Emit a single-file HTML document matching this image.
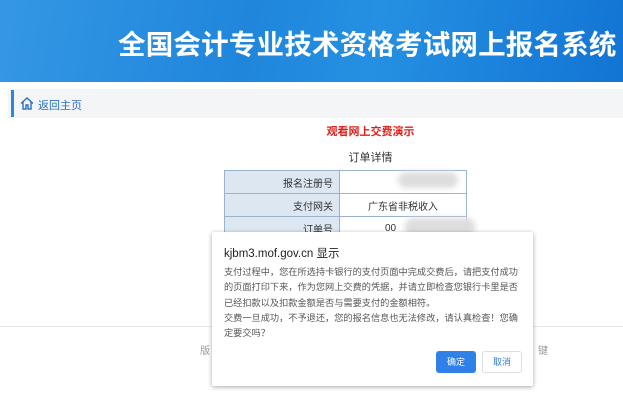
<!DOCTYPE html>
<html><head><meta charset="utf-8"><style>
*{margin:0;padding:0;box-sizing:border-box}
body{width:623px;height:413px;overflow:hidden;background:#fff;font-family:"Liberation Sans","Noto Sans CJK SC",sans-serif;position:relative}
.hdr{position:absolute;left:0;top:0;width:623px;height:82px;background:linear-gradient(100deg,#3597e4 0%,#1f86dc 40%,#2590e2 60%,#1274d4 100%)}
.hdr h1{position:absolute;left:118px;top:22px;color:#fff;font-size:27.5px;font-weight:bold;white-space:nowrap;letter-spacing:0.2px}
.nav{position:absolute;left:8px;top:89px;width:615px;height:29px;background:#f4f5f7}
.nav .bar{position:absolute;left:3px;top:1px;width:3px;height:27px;background:#2c86dc}
.nav span{position:absolute;left:30px;top:8px;font-size:11px;color:#2a6fc0}
.red{position:absolute;left:0;width:623px;top:123px;text-align:center;padding-left:118px;color:#e0201a;font-weight:bold;font-size:11px}
.sub{position:absolute;left:0;width:623px;top:149px;text-align:center;padding-left:118px;font-size:11px;color:#333}
table{position:absolute;left:224px;top:170px;border-collapse:collapse;font-size:10px;color:#333}
td{border:1px solid #9ab3cc;height:23px}
td.l{width:115px;background:#dde7f1;text-align:right;padding-right:6px}
td.r{width:127px;text-align:center}
.blur{position:absolute;background:#ddd;border-radius:8px;filter:blur(3px)}
.line{position:absolute;left:0;top:326px;width:623px;height:1px;background:#e6e6e6}
.foot{position:absolute;top:342px;font-size:10px;color:#999}
.dlg{position:absolute;left:212px;top:232px;width:321px;height:154px;background:#fff;box-shadow:0 1px 5px rgba(0,0,0,.35);border-radius:2px}
.dlg .t{position:absolute;left:12px;top:13px;font-size:11.5px;color:#222}
.dlg .m{position:absolute;left:12px;top:33px;width:300px;font-size:9.2px;line-height:15.3px;color:#555}
.b1{position:absolute;left:224px;top:119px;width:40px;height:22px;background:#2f80e8;border-radius:3px;color:#fff;font-size:9px;text-align:center;line-height:22px}
.b2{position:absolute;left:270px;top:119px;width:40px;height:22px;border:1px solid #ddd;border-radius:3px;color:#2f7de0;font-size:9px;text-align:center;line-height:20px}
</style></head><body>
<div class="hdr"><h1>全国会计专业技术资格考试网上报名系统</h1></div>
<div class="nav"><div class="bar"></div>
<svg style="position:absolute;left:12px;top:8px" width="14" height="13" viewBox="0 0 14 13"><path d="M1 6.5 L7 1 L13 6.5 M3 5 V12 H6 V8 H8 V12 H11 V5" fill="none" stroke="#2a6fc0" stroke-width="1.4"/></svg>
<span>返回主页</span></div>
<div class="red">观看网上交费演示</div>
<div class="sub">订单详情</div>
<table>
<tr><td class="l">报名注册号</td><td class="r"></td></tr>
<tr><td class="l">支付网关</td><td class="r">广东省非税收入</td></tr>
<tr><td class="l">订单号</td><td class="r" style="text-align:left;padding-left:45px">00</td></tr>
</table>
<div class="blur" style="left:398px;top:172px;width:60px;height:16px"></div>
<div class="blur" style="left:405px;top:218px;width:70px;height:18px"></div>
<div class="line"></div>
<div class="foot" style="left:200px">版</div>
<div class="foot" style="left:538px">键</div>
<div class="dlg">
<div class="t">kjbm3.mof.gov.cn 显示</div>
<div class="m">支付过程中，您在所选持卡银行的支付页面中完成交费后，请把支付成功的页面打印下来，作为您网上交费的凭据，并请立即检查您银行卡里是否已经扣款以及扣款金额是否与需要支付的金额相符。<br>交费一旦成功，不予退还，您的报名信息也无法修改，请认真检查！您确定要交吗？</div>
<div class="b1">确定</div><div class="b2">取消</div>
</div>
</body></html>
